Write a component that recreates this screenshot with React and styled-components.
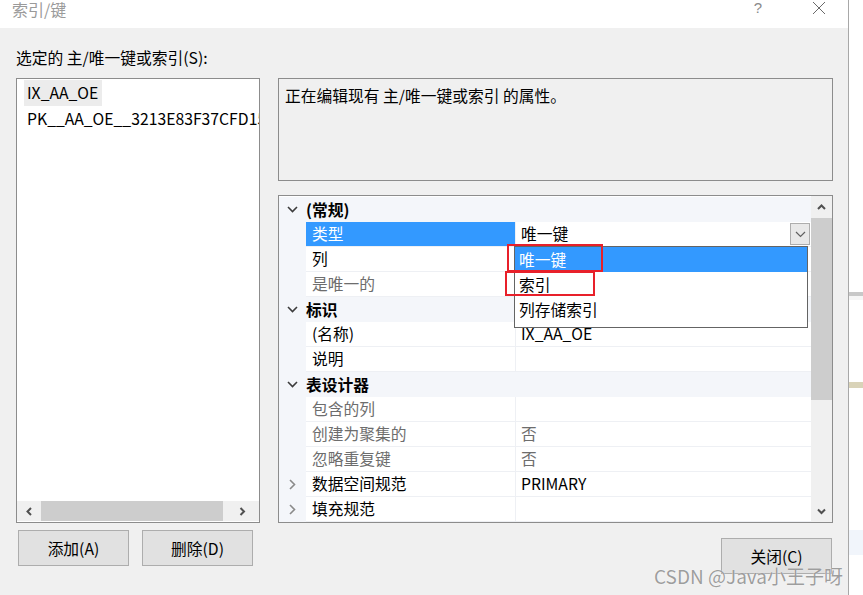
import React from "react";
import styled, { createGlobalStyle } from "styled-components";

const GlobalStyle = createGlobalStyle`
  html, body {
    margin: 0;
    padding: 0;
    background: #ffffff;
  }
  body {
    font-family: "Noto Sans CJK SC", "Noto Sans", sans-serif;
    font-size: 15.75px;
    color: #000;
  }
  * {
    box-sizing: border-box;
  }
`;

const Page = styled.div`
  position: relative;
  width: 863px;
  height: 595px;
  display: flex;
  overflow: hidden;
`;

const Dialog = styled.div`
  width: 849px;
  height: 100%;
  display: flex;
  flex-direction: column;
  background: #f0f0f0;
  border-right: 1px solid #a8a8a8;
`;

const TitleBar = styled.div`
  height: 28px;
  flex-shrink: 0;
  background: #ffffff;
  display: flex;
  align-items: flex-start;
  padding-left: 12px;
  padding-right: 22px;
`;

const Title = styled.div`
  font-size: 16px;
  line-height: 18px;
  color: #9a9a9a;
  flex: 1;
`;

const TitleHelp = styled.div`
  font-family: "Liberation Sans", sans-serif;
  font-size: 15px;
  line-height: 16px;
  color: #8a8a8a;
  margin-right: 50px;
`;

const TitleClose = styled.div`
  width: 14px;
  height: 16px;
  display: flex;
  align-items: center;
  justify-content: center;
`;

const Body = styled.div`
  flex: 1;
  display: flex;
  flex-direction: column;
  padding: 20px 16px 0 16px;
`;

const SectionLabel = styled.div`
  line-height: 20px;
  margin-bottom: 10px;
`;

const Main = styled.div`
  display: grid;
  grid-template-columns: 244px 555px;
  column-gap: 18px;
  height: 438px;
`;

const ListBox = styled.div`
  display: flex;
  flex-direction: column;
  background: #ffffff;
  border: 1px solid #8c8c8c;
  overflow: hidden;
`;

const ListItems = styled.div`
  flex: 1;
  padding: 1px 0 0 7px;
  white-space: nowrap;
  overflow: hidden;
`;

const ListItem = styled.div`
  width: fit-content;
  height: 26px;
  line-height: 26px;
  padding: 0 4px 0 3px;
  background: ${(p) => (p.$selected ? "#ececec" : "transparent")};
`;

const HScroll = styled.div`
  height: 20px;
  margin-bottom: 1px;
  display: grid;
  grid-template-columns: 24px 1fr 34px;
  align-items: center;
  background: #f0f0f0;
`;

const ScrollArrow = styled.div`
  display: flex;
  align-items: center;
  justify-content: center;
  height: 100%;
`;

const HTrack = styled.div`
  height: 100%;
  display: flex;
  align-items: stretch;
`;

const HThumb = styled.div`
  width: 182px;
  background: #cdcdcd;
`;

const RightColumn = styled.div`
  display: flex;
  flex-direction: column;
  gap: 14px;
`;

const Description = styled.div`
  height: 103px;
  border: 1px solid #8c8c8c;
  background: #f0f0f0;
  padding: 7px 6px;
  line-height: 20px;
`;

const PropBox = styled.div`
  flex: 1;
  display: flex;
  border: 1px solid #8c8c8c;
  background: #ffffff;
  overflow: hidden;
`;

const Rows = styled.div`
  flex: 1;
  display: flex;
  flex-direction: column;
  padding-top: 1px;
  overflow: hidden;
`;

const CatRow = styled.div`
  height: 25px;
  flex-shrink: 0;
  display: grid;
  grid-template-columns: 27px 1fr;
  align-items: center;
  background: #f4f6fa;
  font-weight: bold;
`;

const Glyph = styled.div`
  display: flex;
  align-items: center;
  justify-content: center;
  height: 100%;
`;

const PropRow = styled.div`
  height: 25px;
  flex-shrink: 0;
  display: grid;
  grid-template-columns: 27px 210px 1fr;
`;

const Margin = styled.div`
  background: #f4f6fa;
  display: flex;
  align-items: center;
  justify-content: center;
`;

const NameCell = styled.div`
  padding-left: 6px;
  line-height: 24px;
  border-bottom: 1px solid #eef0f4;
  border-right: 1px solid #eef0f4;
  background: ${(p) => (p.$selected ? "#3399ff" : "#ffffff")};
  color: ${(p) => (p.$selected ? "#ffffff" : p.$disabled ? "#6d6d6d" : "#000000")};
  white-space: nowrap;
  overflow: hidden;
`;

const ValueCell = styled.div`
  position: relative;
  display: flex;
  align-items: center;
  padding-left: 5px;
  line-height: 24px;
  border-bottom: 1px solid #eef0f4;
  color: ${(p) => (p.$disabled ? "#6d6d6d" : "#000000")};
  white-space: nowrap;
`;

const ValueText = styled.span`
  flex: 1;
`;

const ComboButton = styled.div`
  width: 20px;
  height: 22px;
  margin-right: 1px;
  border: 1px solid #adadad;
  background: #e8e8e8;
  display: flex;
  align-items: center;
  justify-content: center;
`;

const Popup = styled.div`
  position: absolute;
  top: 24px;
  left: -2px;
  width: 294px;
  height: 82px;
  background: #ffffff;
  border: 1px solid #646464;
  z-index: 5;
`;

const PopupItem = styled.div`
  height: 25px;
  line-height: 25px;
  padding-left: 4px;
  background: ${(p) => (p.$selected ? "#3399ff" : "#ffffff")};
  color: ${(p) => (p.$selected ? "#ffffff" : "#000000")};
`;

const RedMark = styled.div`
  position: absolute;
  border: 2px solid #e8202a;
  pointer-events: none;
`;

const VScroll = styled.div`
  width: 21px;
  display: flex;
  flex-direction: column;
  background: #f0f0f0;
`;

const VArrow = styled.div`
  height: 22px;
  display: flex;
  align-items: center;
  justify-content: center;
  flex-shrink: 0;
`;

const VThumb = styled.div`
  height: 182px;
  background: #cdcdcd;
`;

const VTrack = styled.div`
  flex: 1;
`;

const Footer = styled.div`
  display: flex;
  align-items: flex-start;
  gap: 13px;
  margin-top: 14px;
  padding-left: 2px;
`;

const Button = styled.button`
  width: 111px;
  height: 36px;
  margin-top: ${(p) => p.$offset || 0}px;
  margin-left: ${(p) => (p.$push ? "auto" : "0")};
  background: #e1e1e1;
  border: 1px solid #adadad;
  font-family: inherit;
  font-size: 15.75px;
  color: #000;
  padding: 0;
`;

const BackWindow = styled.div`
  flex: 1;
  height: 100%;
  background:
    linear-gradient(#ffffff 0 292px, #c8c8c8 292px 296px, #f6f6f6 296px 300px,
      #ffffff 300px 382px, #d9d3b8 382px 388px, #ffffff 388px 530px,
      #f1f5fb 530px 555px, #ffffff 555px);
`;

const Watermark = styled.div`
  position: absolute;
  left: 654px;
  top: 564px;
  font-size: 19px;
  line-height: 24px;
  color: rgba(140, 140, 140, 0.85);
  text-shadow: 0 0 1px #ffffff;
  white-space: nowrap;
`;

const ChevronDown = ({ color = "#3c3c3c", w = 1.6 }) => (
  <svg width="11" height="7" viewBox="0 0 11 7">
    <path d="M1 1 L5.5 5.5 L10 1" fill="none" stroke={color} strokeWidth={w} />
  </svg>
);

const ChevronRight = () => (
  <svg width="7" height="11" viewBox="0 0 7 11">
    <path d="M1 1 L5.5 5.5 L1 10" fill="none" stroke="#8a8a8a" strokeWidth="1.6" />
  </svg>
);

const SmallArrow = ({ dir }) => {
  const d = {
    left: "M5 1 L1.5 4.5 L5 8",
    right: "M1.5 1 L5 4.5 L1.5 8",
    up: "M1 5 L4.5 1.5 L8 5",
    down: "M1 1.5 L4.5 5 L8 1.5",
  }[dir];
  const horiz = dir === "left" || dir === "right";
  return (
    <svg width={horiz ? 7 : 9} height={horiz ? 9 : 7} viewBox={horiz ? "0 0 7 9" : "0 0 9 7"}>
      <path d={d} fill="none" stroke="#505050" strokeWidth="2" />
    </svg>
  );
};

const Category = ({ children }) => (
  <CatRow>
    <Glyph>
      <ChevronDown />
    </Glyph>
    <span>{children}</span>
  </CatRow>
);

const Prop = ({ name, value, disabled, selected, expandable, children }) => (
  <PropRow>
    <Margin>{expandable && <ChevronRight />}</Margin>
    <NameCell $selected={selected} $disabled={disabled}>
      {name}
    </NameCell>
    <ValueCell $disabled={disabled}>
      <ValueText>{value}</ValueText>
      {children}
    </ValueCell>
  </PropRow>
);

export default function App() {
  return (
    <Page>
      <GlobalStyle />
      <Dialog>
        <TitleBar>
          <Title>索引/键</Title>
          <TitleHelp>?</TitleHelp>
          <TitleClose>
            <svg width="14" height="14" viewBox="0 0 14 14">
              <path d="M1 1 L13 13 M13 1 L1 13" stroke="#6a6a6a" strokeWidth="1" />
            </svg>
          </TitleClose>
        </TitleBar>
        <Body>
          <SectionLabel>选定的 主/唯一键或索引(S):</SectionLabel>
          <Main>
            <ListBox>
              <ListItems>
                <ListItem $selected>IX_AA_OE</ListItem>
                <ListItem>PK__AA_OE__3213E83F37CFD15</ListItem>
              </ListItems>
              <HScroll>
                <ScrollArrow>
                  <SmallArrow dir="left" />
                </ScrollArrow>
                <HTrack>
                  <HThumb />
                </HTrack>
                <ScrollArrow>
                  <SmallArrow dir="right" />
                </ScrollArrow>
              </HScroll>
            </ListBox>
            <RightColumn>
              <Description>正在编辑现有 主/唯一键或索引 的属性。</Description>
              <PropBox>
                <Rows>
                  <Category>(常规)</Category>
                  <Prop name="类型" value="唯一键" selected>
                    <ComboButton>
                      <ChevronDown color="#606060" w={1.2} />
                    </ComboButton>
                    <Popup>
                      <PopupItem $selected>唯一键</PopupItem>
                      <PopupItem>索引</PopupItem>
                      <PopupItem>列存储索引</PopupItem>
                      <RedMark style={{ left: -8, top: -3, width: 96, height: 28 }} />
                      <RedMark style={{ left: -10, top: 24, width: 90, height: 25 }} />
                    </Popup>
                  </Prop>
                  <Prop name="列" value="" />
                  <Prop name="是唯一的" value="" disabled />
                  <Category>标识</Category>
                  <Prop name="(名称)" value="IX_AA_OE" />
                  <Prop name="说明" value="" />
                  <Category>表设计器</Category>
                  <Prop name="包含的列" value="" disabled />
                  <Prop name="创建为聚集的" value="否" disabled />
                  <Prop name="忽略重复键" value="否" disabled />
                  <Prop name="数据空间规范" value="PRIMARY" expandable />
                  <Prop name="填充规范" value="" expandable />
                </Rows>
                <VScroll>
                  <VArrow>
                    <SmallArrow dir="up" />
                  </VArrow>
                  <VThumb />
                  <VTrack />
                  <VArrow>
                    <SmallArrow dir="down" />
                  </VArrow>
                </VScroll>
              </PropBox>
            </RightColumn>
          </Main>
          <Footer>
            <Button>添加(A)</Button>
            <Button>删除(D)</Button>
            <Button $push $offset={8}>关闭(C)</Button>
          </Footer>
        </Body>
      </Dialog>
      <BackWindow />
      <Watermark>CSDN @Java小王子呀</Watermark>
    </Page>
  );
}
